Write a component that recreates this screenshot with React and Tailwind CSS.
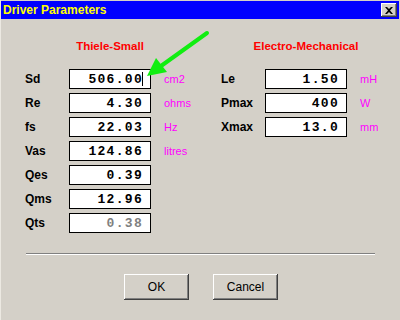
import React from 'react';

const bevel = 'shadow-[inset_-1px_-1px_0_#404040,inset_1px_1px_0_#ffffff,inset_-2px_-2px_0_#808080]';

const leftRows = [
    { label: 'Sd', value: '506.00', unit: 'cm2', caret: true },
    { label: 'Re', value: '4.30', unit: 'ohms' },
    { label: 'fs', value: '22.03', unit: 'Hz' },
    { label: 'Vas', value: '124.86', unit: 'litres' },
    { label: 'Qes', value: '0.39', unit: '' },
    { label: 'Qms', value: '12.96', unit: '' },
    { label: 'Qts', value: '0.38', unit: '', disabled: true },
];

const rightRows = [
    { label: 'Le', value: '1.50', unit: 'mH' },
    { label: 'Pmax', value: '400', unit: 'W' },
    { label: 'Xmax', value: '13.0', unit: 'mm' },
];

const Field = ({ row }) => (
    <div className="flex items-center h-[20px]">
        <div className="w-[44px] text-[12px] font-bold text-black">{row.label}</div>
        <div className="w-[82px] h-[20px] bg-white border border-black flex items-center justify-end pr-[7px]">
            <span
                className={`font-['Liberation_Mono',monospace] font-bold text-[13px] tracking-[1.3px] leading-none ${row.disabled ? 'text-[#808080]' : 'text-black'}`}
            >
                {row.value}
            </span>
            {row.caret && <span className="w-[1px] h-[14px] bg-black -ml-[1px]" />}
        </div>
        <div className="ml-[13px] text-[11px] text-[#ff00ff]">{row.unit}</div>
    </div>
);

const Column = ({ title, rows, width }) => (
    <div className={`flex flex-col ${width}`}>
        <div className="flex h-[14px] mb-[16px]">
            <div className="w-[44px]" />
            <div className="w-[82px] flex justify-center whitespace-nowrap text-[11.5px] font-bold text-[#ff0000] leading-[14px]">
                {title}
            </div>
        </div>
        <div className="flex flex-col gap-[4px]">
            {rows.map(r => <Field key={r.label} row={r} />)}
        </div>
    </div>
);

const App = () => {
    return (
        <div className="relative w-[400px] h-[320px] bg-[#d4d0c8] border-l border-[#ece9e2] font-['Liberation_Sans',Arial,sans-serif] overflow-hidden">
            <div className="mt-[1px] mr-[1px] h-[18px] bg-[#0000ff] flex items-center justify-between pl-[2px] pr-[2px]">
                <span className="text-[12px] font-bold text-[#ffff00] leading-none">Driver Parameters</span>
                <button className={`w-[16px] h-[14px] bg-[#d4d0c8] ${bevel} flex items-center justify-center`}>
                    <svg width="8" height="7" viewBox="0 0 8 7">
                        <path d="M0 0h2l2 2 2-2h2L5 3.5 8 7H6L4 5 2 7H0l3-3.5z" fill="#000" />
                    </svg>
                </button>
            </div>

            <div className="flex pt-[20px] pl-[24px]">
                <Column title="Thiele-Small" rows={leftRows} width="w-[196px]" />
                <Column title="Electro-Mechanical" rows={rightRows} width="w-[160px]" />
            </div>

            <div className="mx-[25px] mt-[20px] h-[2px] border-t border-[#808080] border-b border-b-white" />

            <div className="flex justify-center gap-[24px] mt-[19px] pl-[1px]">
                <button className={`w-[65px] h-[26px] bg-[#d4d0c8] ${bevel} text-[12px] text-black`}>OK</button>
                <button className={`w-[65px] h-[26px] bg-[#d4d0c8] ${bevel} text-[12px] text-black`}>Cancel</button>
            </div>

            {/* green pointer arrow */}
            <svg className="absolute left-0 top-0 pointer-events-none" width="400" height="320">
                <line x1="206" y1="33" x2="160" y2="66" stroke="#11ee11" strokeWidth="4" strokeLinecap="round" />
                <polygon points="146,76 155,58 166,72" fill="#11ee11" />
            </svg>
        </div>
    );
};

export default App;
